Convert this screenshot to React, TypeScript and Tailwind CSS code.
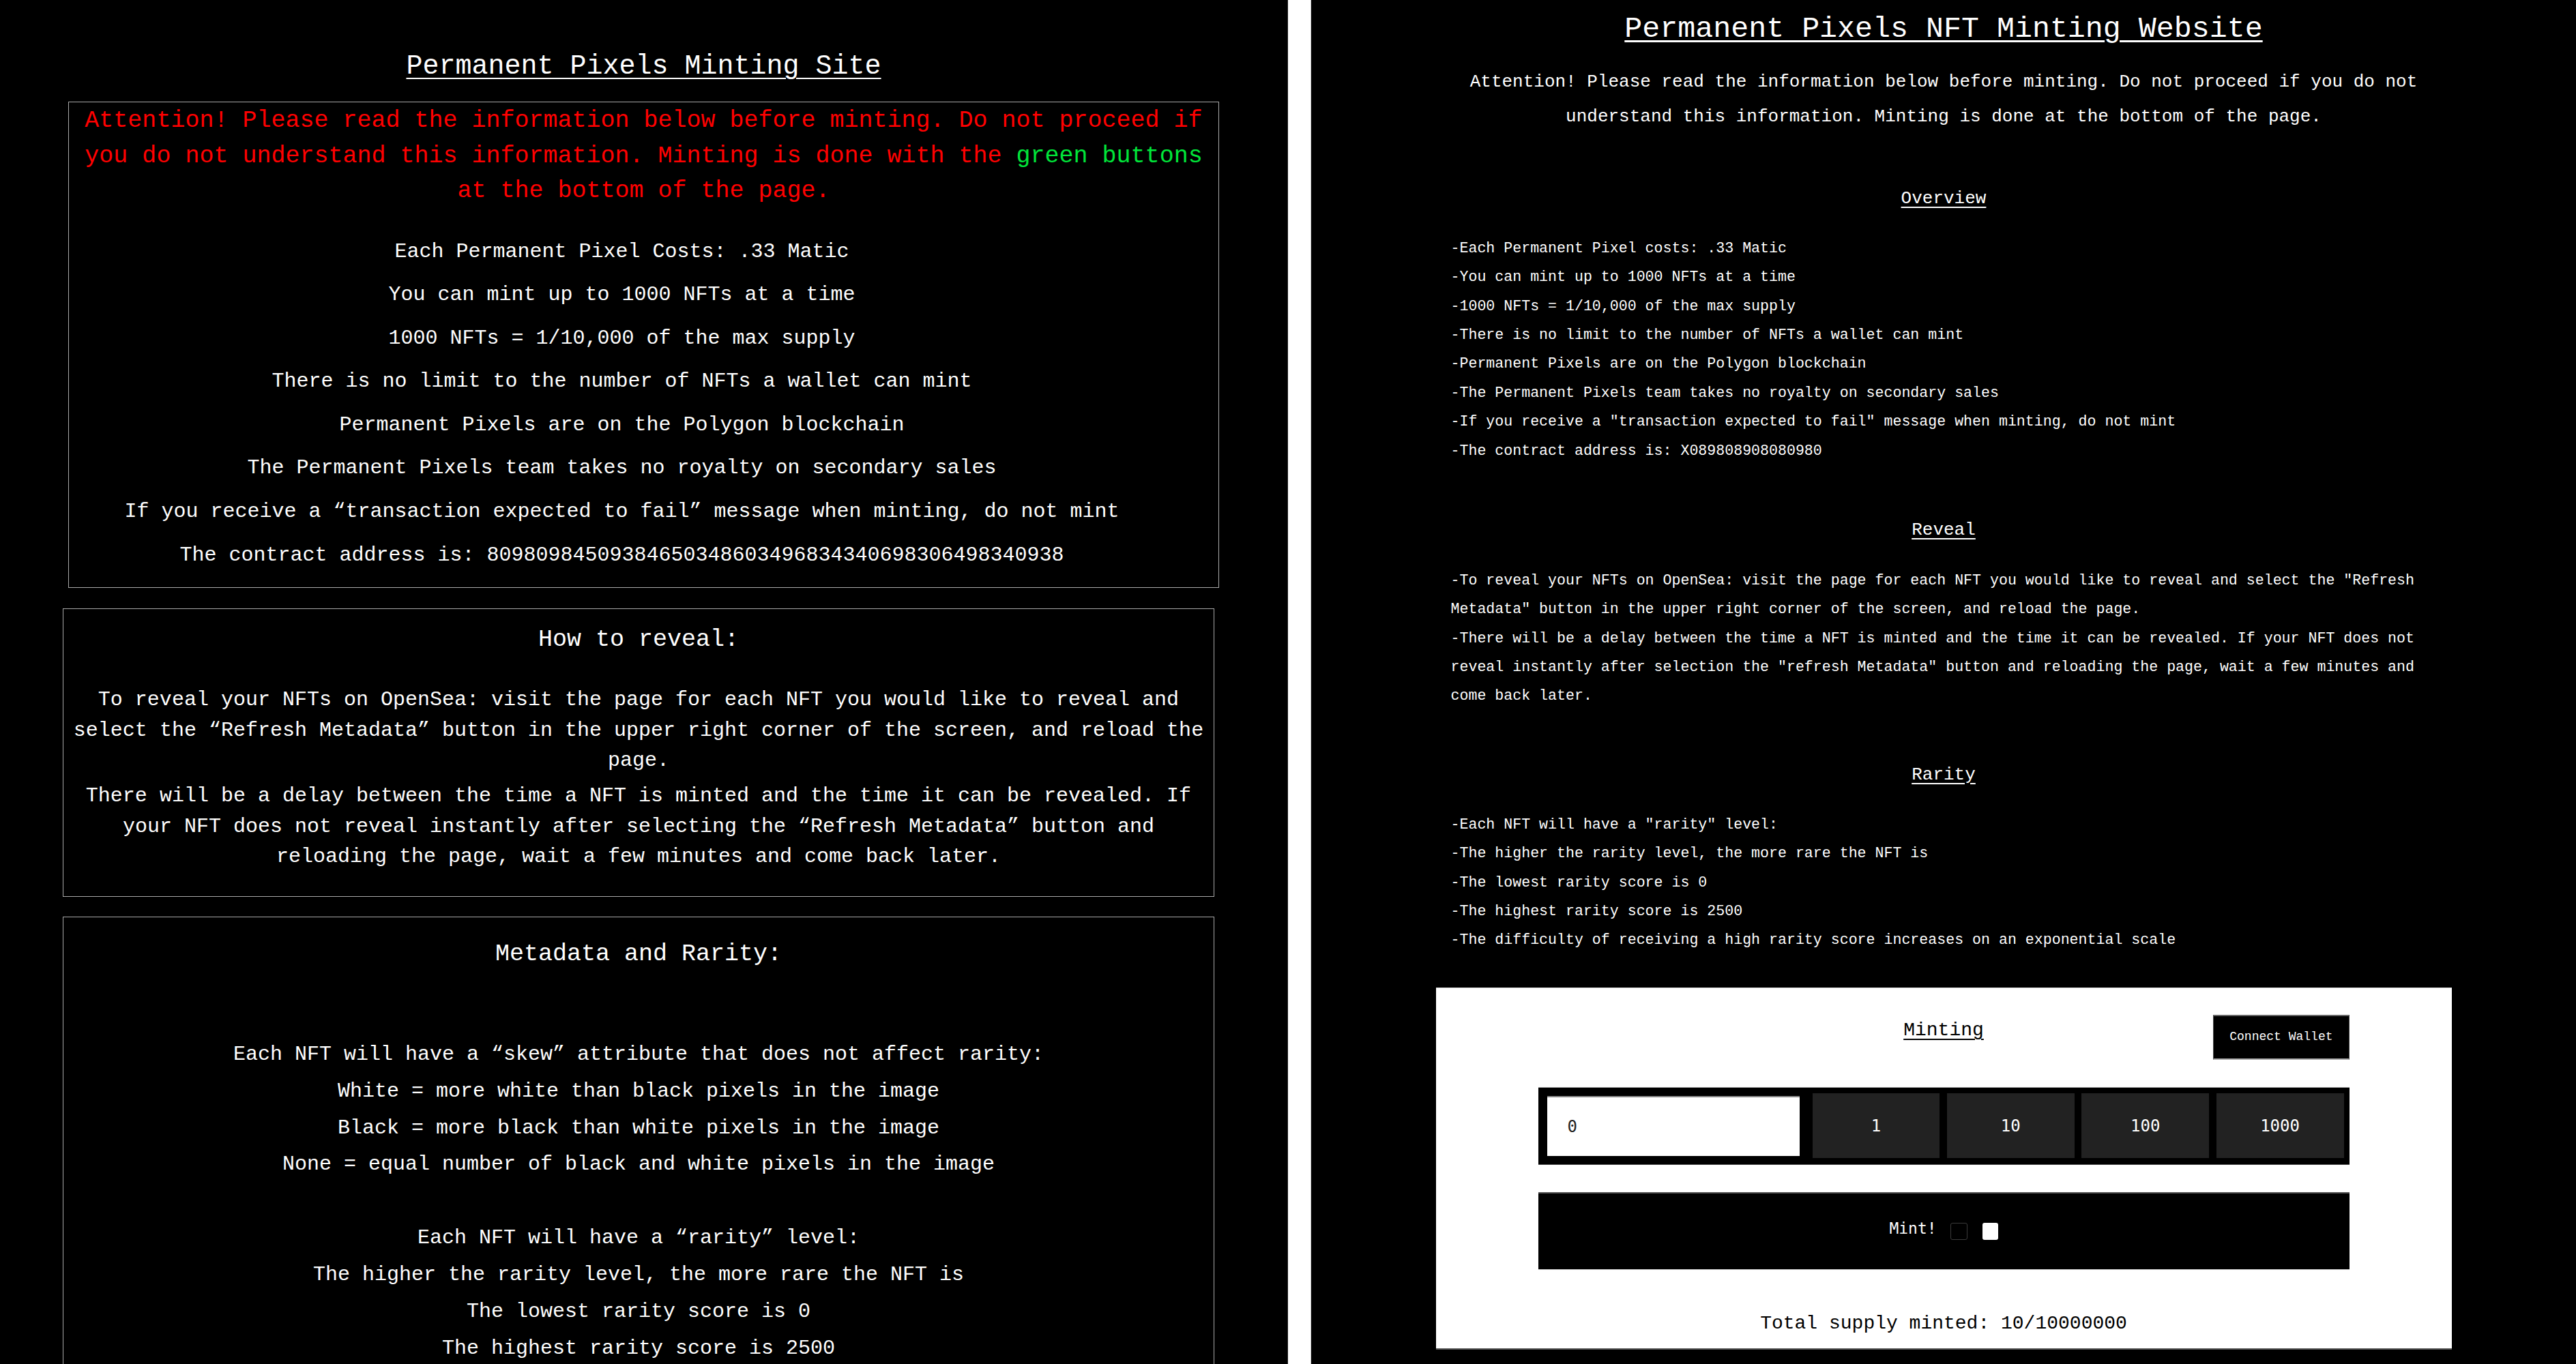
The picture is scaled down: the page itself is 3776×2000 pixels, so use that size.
import React from 'react';

const costLines = [
  'Each Permanent Pixel Costs: .33 Matic',
  'You can mint up to 1000 NFTs at a time',
  '1000 NFTs = 1/10,000 of the max supply',
  'There is no limit to the number of NFTs a wallet can mint',
  'Permanent Pixels are on the Polygon blockchain',
  'The Permanent Pixels team takes no royalty on secondary sales',
  'If you receive a “transaction expected to fail” message when minting, do not mint',
  'The contract address is: 80980984509384650348603496834340698306498340938',
];

const skewLines = [
  'Each NFT will have a “skew” attribute that does not affect rarity:',
  'White = more white than black pixels in the image',
  'Black = more black than white pixels in the image',
  'None = equal number of black and white pixels in the image',
];

const rarityLinesLeft = [
  'Each NFT will have a “rarity” level:',
  'The higher the rarity level, the more rare the NFT is',
  'The lowest rarity score is 0',
  'The highest rarity score is 2500',
];

const overview = [
  '-Each Permanent Pixel costs: .33 Matic',
  '-You can mint up to 1000 NFTs at a time',
  '-1000 NFTs = 1/10,000 of the max supply',
  '-There is no limit to the number of NFTs a wallet can mint',
  '-Permanent Pixels are on the Polygon blockchain',
  '-The Permanent Pixels team takes no royalty on secondary sales',
  '-If you receive a "transaction expected to fail" message when minting, do not mint',
  '-The contract address is: X089808908080980',
];

const reveal = [
  '-To reveal your NFTs on OpenSea: visit the page for each NFT you would like to reveal and select the "Refresh Metadata" button in the upper right corner of the screen, and reload the page.',
  '-There will be a delay between the time a NFT is minted and the time it can be revealed. If your NFT does not reveal instantly after selection the "refresh Metadata" button and reloading the page, wait a few minutes and come back later.',
];

const rarity = [
  '-Each NFT will have a "rarity" level:',
  '-The higher the rarity level, the more rare the NFT is',
  '-The lowest rarity score is 0',
  '-The highest rarity score is 2500',
  '-The difficulty of receiving a high rarity score increases on an exponential scale',
];

const amounts = ['1', '10', '100', '1000'];

const LeftPanel = () => (
  <div className="w-[1887px] shrink-0 bg-black text-white">
    <h1 className="pt-[74px] text-center text-[40px] leading-[47px] underline decoration-2 underline-offset-[6px]">
      Permanent Pixels Minting Site
    </h1>

    <div className="mx-[100px] mt-[28px] border border-[#aaaaaa] pt-[2px] pb-[15px]">
      <p className="text-center text-[35px] leading-[51.5px] text-[#ff0000]">
        Attention! Please read the information below before minting. Do not proceed if you do not
        understand this information. Minting is done with the{' '}
        <span className="text-[#00e63a]">green buttons</span> at the bottom of the page.
      </p>
      <div className="mt-[31px] pr-[64px] text-center text-[30px] leading-[63.6px]">
        {costLines.map((line) => (
          <p key={line}>{line}</p>
        ))}
      </div>
    </div>

    <div className="ml-[92px] mt-[30px] w-[1688px] border border-[#aaaaaa] px-[4px] pt-[22px] pb-[35px] text-center">
      <h2 className="text-[35px] leading-[46px]">How to reveal:</h2>
      <p className="mt-[43px] text-[30px] leading-[44.4px]">
        To reveal your NFTs on OpenSea: visit the page for each NFT you would like to reveal and select the “Refresh Metadata” button in the upper right corner of the screen, and reload the page.
      </p>
      <p className="mt-[8px] text-[30px] leading-[44.4px]">
        There will be a delay between the time a NFT is minted and the time it can be revealed. If your NFT does not reveal instantly after selecting the “Refresh Metadata” button and reloading the page, wait a few minutes and come back later.
      </p>
    </div>

    <div className="ml-[92px] mt-[29px] w-[1688px] border border-[#aaaaaa] px-[4px] pt-[31px] pb-[40px] text-center">
      <h2 className="text-[35px] leading-[46px]">Metadata and Rarity:</h2>
      <div className="mt-[98px] text-[30px] leading-[53.9px]">
        {skewLines.map((line) => (
          <p key={line}>{line}</p>
        ))}
        <div className="h-[53.9px]" />
        {rarityLinesLeft.map((line) => (
          <p key={line}>{line}</p>
        ))}
      </div>
    </div>
  </div>
);

const SectionTitle = ({ children, className = '' }: { children: React.ReactNode; className?: string }) => (
  <h2 className={`text-center text-[26px] leading-[51px] underline decoration-2 underline-offset-[5px] ${className}`}>
    {children}
  </h2>
);

const MintCard = () => (
  <div className="mx-auto mt-[48px] w-[1489px] border-t border-t-[#dddddd] border-b-2 border-b-[#555555] bg-white pt-[39px] pb-[16px] text-black">
    <div className="mx-auto w-[1189px]">
      <div className="grid grid-cols-[1fr_auto_1fr] items-start">
        <div />
        <h3 className="mt-[3px] text-[28px] leading-[40px] underline decoration-2 underline-offset-[5px]">Minting</h3>
        <button className="h-[66px] justify-self-end border-x border-x-[#444444] border-t-2 border-t-[#666666] border-b-2 border-b-[#aaaaaa] bg-black px-[23px] text-[18px] text-white">
          Connect Wallet
        </button>
      </div>

      <div className="mt-[40px] flex h-[114px] items-center border-t border-t-[#999999] border-b border-b-[#444444] bg-black pl-[13px] pr-[8px] font-['DejaVu_Sans_Mono',monospace]">
        <input
          readOnly
          value="0"
          className="mr-[19px] h-[88px] w-[370px] shrink-0 border-t-2 border-t-[#8a8a8a] bg-white pl-[30px] text-[24px] text-[#222222] outline-none"
        />
        <div className="flex flex-1 gap-[10.5px]">
          {amounts.map((a) => (
            <button key={a} className="h-[95px] flex-1 bg-[#222222] text-[24px] text-white">
              {a}
            </button>
          ))}
        </div>
      </div>

      <button className="mt-[40px] flex h-[114px] w-full items-center justify-center border-t-2 border-t-[#555555] border-b border-b-[#cccccc] bg-black font-['DejaVu_Sans_Mono',monospace] text-[23px] text-white">
        <span className="-mt-[8px]">Mint!</span>
        <span className="ml-[20px] h-[25px] w-[25px] rounded-[3px] border border-[#3a3a3a] bg-black" />
        <span className="ml-[22px] h-[25px] w-[23px] rounded-[3px] bg-white" />
      </button>

      <p className="mt-[59px] text-center text-[28px] leading-[40px]">Total supply minted: 10/10000000</p>
    </div>
  </div>
);

const RightPanel = () => (
  <div className="min-w-0 flex-1 bg-black pt-[18px] text-white">
    <h1 className="text-center text-[43.3px] leading-[50px] underline decoration-[3px] underline-offset-[5px]">
      Permanent Pixels NFT Minting Website
    </h1>
    <div className="mx-auto w-[1445px]">
      <p className="mt-[26.5px] text-center text-[26px] leading-[51px]">
        Attention! Please read the information below before minting. Do not proceed if you do not
        understand this information. Minting is done at the bottom of the page.
      </p>

      <SectionTitle className="mt-[69px]">Overview</SectionTitle>
      <div className="mt-[26.3px] text-[21.6px] leading-[42.4px]">
        {overview.map((line) => (
          <p key={line}>{line}</p>
        ))}
      </div>

      <SectionTitle className="mt-[69.5px]">Reveal</SectionTitle>
      <div className="mt-[27.3px] text-[21.6px] leading-[42.4px]">
        {reveal.map((line) => (
          <p key={line}>{line}</p>
        ))}
      </div>

      <SectionTitle className="mt-[68.7px]">Rarity</SectionTitle>
      <div className="mt-[26.3px] text-[21.6px] leading-[42.4px]">
        {rarity.map((line) => (
          <p key={line}>{line}</p>
        ))}
      </div>
    </div>
    <MintCard />
  </div>
);

export default function App() {
  return (
    <div className="flex h-[2000px] w-[3776px] overflow-hidden bg-black font-['Liberation_Mono',monospace]">
      <LeftPanel />
      <div className="w-[35px] shrink-0 border-l border-l-[#222222] border-r border-r-[#cccccc] bg-white" />
      <RightPanel />
    </div>
  );
}
